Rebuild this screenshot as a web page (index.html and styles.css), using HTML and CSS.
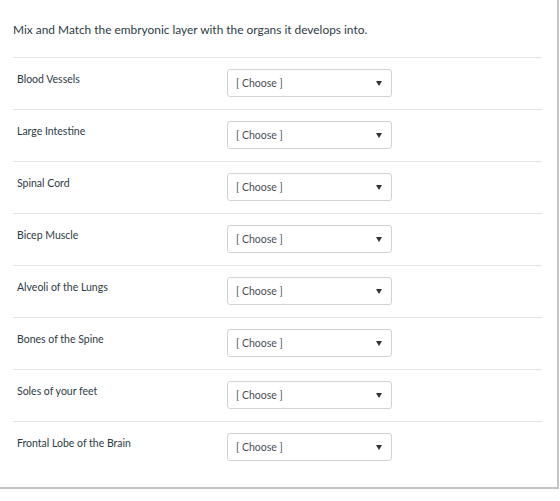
FILE: index.html
```html
<!DOCTYPE html>
<html>
<head>
<meta charset="utf-8">
<link rel="stylesheet" href="styles.css">
</head>
<body>
<div class="panel">
  <div class="question">
    <p class="prompt">Mix and Match the embryonic layer with the organs it develops into.</p>
    <div class="answers">
      <div class="row"><div class="label">Blood Vessels</div><div class="select"><span class="opt">[ Choose ]</span><span class="caret"></span></div></div>
      <div class="row"><div class="label">Large Intestine</div><div class="select"><span class="opt">[ Choose ]</span><span class="caret"></span></div></div>
      <div class="row"><div class="label">Spinal Cord</div><div class="select"><span class="opt">[ Choose ]</span><span class="caret"></span></div></div>
      <div class="row"><div class="label">Bicep Muscle</div><div class="select"><span class="opt">[ Choose ]</span><span class="caret"></span></div></div>
      <div class="row"><div class="label">Alveoli of the Lungs</div><div class="select"><span class="opt">[ Choose ]</span><span class="caret"></span></div></div>
      <div class="row"><div class="label">Bones of the Spine</div><div class="select"><span class="opt">[ Choose ]</span><span class="caret"></span></div></div>
      <div class="row"><div class="label">Soles of your feet</div><div class="select"><span class="opt">[ Choose ]</span><span class="caret"></span></div></div>
      <div class="row"><div class="label">Frontal Lobe of the Brain</div><div class="select"><span class="opt">[ Choose ]</span><span class="caret"></span></div></div>
    </div>
  </div>
</div>
</body>
</html>
```
FILE: styles.css
```css
html, body {
  margin: 0;
  padding: 0;
  background: #ffffff;
}
body {
  font-family: Lato, "Open Sans", sans-serif;
  color: #2d3b45;
}
.panel {
  width: 557px;
  height: 487px;
  border-right: 2px solid #c4c4c4;
  border-bottom: 2px solid #c4c4c4;
  box-sizing: content-box;
}
.question {
  padding: 23px 15px 0 13px;
}
.prompt {
  margin: 0;
  font-size: 11.9px;
  line-height: 14px;
  color: #2d3b45;
}
.answers {
  margin-top: 20px;
}
.row {
  display: flex;
  align-items: flex-start;
  border-top: 1px solid #e3e3e3;
  height: 51px;
}
.label {
  width: 210px;
  padding-left: 4px;
  padding-top: 14px;
  font-size: 10.5px;
  line-height: 14px;
  color: #2d3b45;
}
.select {
  margin-top: 11px;
  width: 165px;
  height: 28px;
  box-sizing: border-box;
  border: 1px solid #cfd3d6;
  border-radius: 3px;
  display: flex;
  align-items: center;
  justify-content: space-between;
  padding: 0 9px 0 8px;
}
.opt {
  font-size: 10.5px;
  color: #4a4f54;
}
.caret {
  width: 0;
  height: 0;
  border-left: 3px solid transparent;
  border-right: 3px solid transparent;
  border-top: 5px solid #333;
}
```
